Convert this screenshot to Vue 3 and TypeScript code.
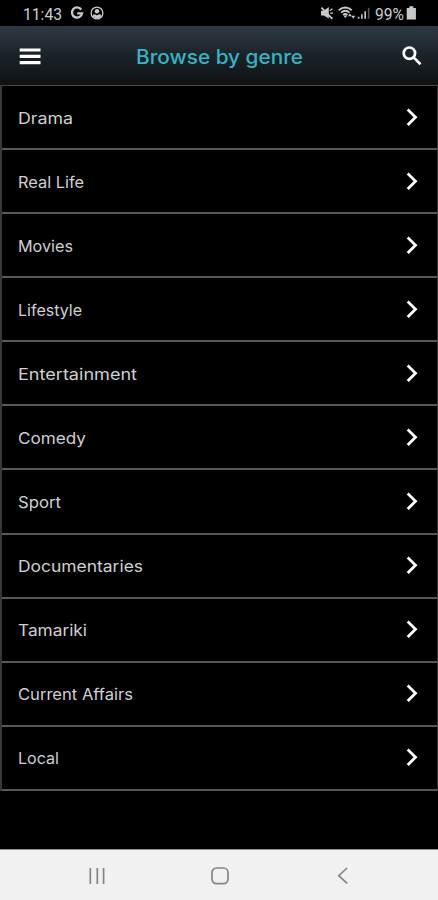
<script setup lang="ts">
interface Genre {
  name: string
  width: number
}

const genres: Genre[] = [
  { name: 'Drama', width: 55 },
  { name: 'Real Life', width: 66 },
  { name: 'Movies', width: 55 },
  { name: 'Lifestyle', width: 64 },
  { name: 'Entertainment', width: 119 },
  { name: 'Comedy', width: 68 },
  { name: 'Sport', width: 43 },
  { name: 'Documentaries', width: 125 },
  { name: 'Tamariki', width: 69 },
  { name: 'Current Affairs', width: 115 },
  { name: 'Local', width: 41 },
]
</script>

<template>
  <div class="screen">
    <div class="status">
      <div class="status-group">
        <svg class="clock" width="41" height="26"><text x="0" y="19.5" textLength="39" lengthAdjust="spacingAndGlyphs">11:43</text></svg>
        <svg class="google" width="14" height="14" viewBox="0 0 14 14"><path d="M11.2 3.5A5.1 5.1 0 1 0 12.1 7.4H7.2" /></svg>
        <svg class="account" width="14" height="14" viewBox="0 0 14 14">
          <circle cx="7" cy="7" r="5.9" /><circle class="fill" cx="7" cy="5.2" r="2.2" />
          <path class="fill" d="M3 10.4V8.5h2.4L7 9.5l1.6-1H11v1.9Q9 12.4 7 12.4T3 10.4Z" />
        </svg>
      </div>
      <div class="status-group right">
        <svg width="14" height="14" viewBox="0 0 14 14">
          <path class="fill" d="M1 4.8h2.7L8.8 1v11.6L3.7 9.4H1Z" />
          <path class="slash" d="M1.4 1.6 12.4 12.8" />
          <path class="wave" d="M9.8 4.8 12.4 2.8M10.2 7.2h2.8" />
        </svg>
        <svg class="wifi" width="18" height="14" viewBox="0 0 18 14">
          <path d="M.8 4.2Q7.3-1.2 13.8 4.2M3 6.6Q7.3 2.9 11.6 6.6M5.1 8.9Q7.3 7 9.5 8.9" />
          <path class="fill" d="m5.2 9.4 2.1 2.6 2.1-2.6ZM10 10.2l1.9-2.8 1.9 2.8ZM13.2 9.8h4L15.2 12.8Z" />
        </svg>
        <svg class="signal" width="14" height="14" viewBox="0 0 14 14"><path d="M1.6 12.8v-2M4.9 12.8V8.3M8.2 12.8V5.3" /><path class="dim" d="M11.6 12.8V1.8" /></svg>
        <svg class="percent" width="31" height="26"><text x="0" y="19.5" textLength="29" lengthAdjust="spacingAndGlyphs">99%</text></svg>
        <svg width="11" height="16" viewBox="0 0 11 16"><path class="fill" d="M3.3 1.3h4v1.8h2.6v11.4H.7V3.1h2.6Z" /></svg>
      </div>
    </div>

    <header class="header">
      <svg class="menu" width="22" height="18" viewBox="0 0 22 18"><path d="M.7 3h20.8M.7 9.3h20.8M.7 15.7h20.8" /></svg>
      <svg class="title" width="170" height="30"><text x="0" y="22.8" textLength="167" lengthAdjust="spacingAndGlyphs">Browse by genre</text></svg>
      <svg class="search" width="22" height="22" viewBox="0 0 22 22"><circle cx="8.4" cy="8.2" r="5.7" /><path d="m12.6 12.4 6.9 6.8" /></svg>
    </header>

    <ul class="genres">
      <li v-for="genre in genres" :key="genre.name" class="genre">
        <svg class="label" width="180" height="24">
          <text x="0" y="18.2" :textLength="genre.width" lengthAdjust="spacingAndGlyphs">{{ genre.name }}</text>
        </svg>
        <svg class="chevron" width="12" height="20" viewBox="0 0 12 20"><path d="m1.7 1.4 7.8 7.8-7.8 7.8" /></svg>
      </li>
    </ul>

    <nav class="navbar">
      <svg width="18" height="18" viewBox="0 0 18 18"><path d="M2.3 1v16M9.3 1v16M15.6 1v16" /></svg>
      <svg width="18" height="18" viewBox="0 0 18 18"><rect x="1" y="1" width="16" height="15.6" rx="4.5" /></svg>
      <svg width="18" height="18" viewBox="0 0 18 18"><path d="M13.1 1 4.8 8.7l8.3 7.7" /></svg>
    </nav>
  </div>
</template>

<style>
body {
  background: #000;
}
</style>

<style scoped>
.screen {
  display: flex;
  flex-direction: column;
  width: 438px;
  height: 900px;
  overflow: hidden;
  background: #000;
}
svg {
  display: block;
  flex: none;
  fill: none;
}
.status {
  display: flex;
  justify-content: space-between;
  height: 26px;
  box-sizing: border-box;
  padding: 0 21px 0 23px;
  stroke: #c9c9c9;
  font: 16px Roboto, sans-serif;
}
.status-group {
  display: flex;
  align-items: center;
}
.status text {
  fill: #cecece;
  stroke: none;
}
.fill {
  fill: #c9c9c9;
  stroke: none;
}
.google {
  margin-left: 6px;
  stroke-width: 2.3;
}
.account {
  margin-left: 6px;
  stroke-width: 1.3;
}
.slash {
  stroke-width: 1.8;
}
.wave {
  stroke-width: 1.2;
}
.wifi {
  margin-left: 4px;
  stroke-width: 1.8;
}
.signal {
  margin-left: 1px;
  stroke-width: 1.6;
}
.dim {
  stroke: #555;
}
.percent {
  margin-left: 4px;
}
.header {
  display: flex;
  align-items: center;
  justify-content: space-between;
  height: 59px;
  flex: none;
  box-sizing: border-box;
  padding: 0 15px 0 19px;
  background: linear-gradient(#2d3a42, #1b2328 50%, #0f1112);
  stroke: #fff;
}
.menu {
  stroke-width: 3.2;
}
.title {
  stroke: none;
  font: 500 19.5px Inter, sans-serif;
}
.title text {
  fill: #37b3c3;
}
.search {
  stroke-width: 2.7;
}
.genres {
  margin: 0;
  padding: 0;
  list-style: none;
  border: 1px solid #484848;
  border-width: 1px 1px 0 2px;
  border-left-color: #383838;
  border-right-color: #383838;
}
.genre {
  display: flex;
  align-items: center;
  justify-content: space-between;
  height: 64.08px;
  box-sizing: border-box;
  padding: 1px 19px 0 16px;
  border-bottom: 2px solid #595959;
  background: #000;
}
.label {
  font: 400 16px Inter, sans-serif;
}
.label text {
  fill: #d0d0d0;
}
.chevron {
  stroke: #fff;
  stroke-width: 2.8;
}
.navbar {
  display: flex;
  align-items: center;
  justify-content: space-between;
  height: 51px;
  box-sizing: border-box;
  margin-top: auto;
  padding: 1px 86px 0 88px;
  border-top: 1px solid #929292;
  background: #f1f1f1;
  stroke: #858585;
  stroke-width: 1.7;
}
</style>
